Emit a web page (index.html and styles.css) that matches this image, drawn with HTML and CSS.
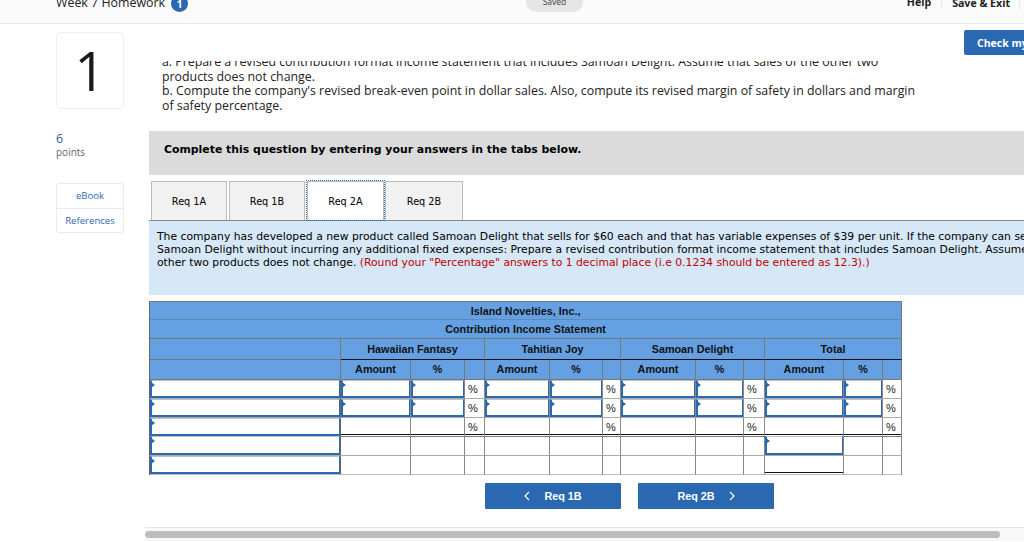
FILE: index.html
```html
<!DOCTYPE html>
<html lang="en">
<head>
<meta charset="utf-8">
<title>Week 7 Homework</title>
<link rel="stylesheet" href="styles.css">
</head>
<body>
<div class="page">
  <header class="topbar">
    <div class="assign"><span class="assign-name">Week 7 Homework</span><span class="badge">1</span></div>
    <div class="saved">Saved</div>
    <nav class="toplinks"><span class="toplink">Help</span><span class="toplink toplink-sep">Save &amp; Exit</span></nav>
  </header>
  <div class="main">
    <aside class="side">
      <div class="qnum">1</div>
      <div class="pts"><div class="pts-n">6</div><div class="pts-l">points</div></div>
      <div class="refs"><div class="ref ref-first">eBook</div><div class="ref">References</div></div>
    </aside>
    <section class="content">
      <div class="checkrow"><button class="check">Check my work</button></div>
      <div class="qtext"><p class="qtext-in">a. Prepare a revised contribution format income statement that includes Samoan Delight. Assume that sales of the other two<br>products does not change.<br>b. Compute the company's revised break-even point in dollar sales. Also, compute its revised margin of safety in dollars and margin<br>of safety percentage.</p></div>
      <div class="instr">Complete this question by entering your answers in the tabs below.</div>
      <div class="tabs">
        <div class="tab">Req 1A</div>
        <div class="tab">Req 1B</div>
        <div class="tab tab-on">Req 2A</div>
        <div class="tab">Req 2B</div>
      </div>
      <div class="prompt">The company has developed a new product called Samoan Delight that sells for $60 each and that has variable expenses of $39 per unit. If the company can sell<br>Samoan Delight without incurring any additional fixed expenses: Prepare a revised contribution format income statement that includes Samoan Delight. Assume that sales of the<br>other two products does not change. <span class="red">(Round your "Percentage" answers to 1 decimal place (i.e 0.1234 should be entered as 12.3).)</span></div>
      <table class="sheet">
        <colgroup>
          <col class="c191"><col class="c70"><col class="c54"><col class="c20"><col class="c65"><col class="c53"><col class="c18"><col class="c75"><col class="c48"><col class="c21"><col class="c79"><col class="c39"><col class="c19">
        </colgroup>
        <tr class="h1"><th colspan="13">Island Novelties, Inc.,</th></tr>
        <tr class="h2"><th colspan="13">Contribution Income Statement</th></tr>
        <tr class="h3"><th></th><th colspan="3">Hawaiian Fantasy</th><th colspan="3">Tahitian Joy</th><th colspan="3">Samoan Delight</th><th colspan="3">Total</th></tr>
        <tr class="h4"><th></th><th>Amount</th><th>%</th><th></th><th>Amount</th><th>%</th><th></th><th>Amount</th><th>%</th><th></th><th>Amount</th><th>%</th><th></th></tr>
        <tr class="d">
          <td><div class="inp"></div></td><td><div class="inp"></div></td><td><div class="inp"></div></td><td class="pc">%</td><td><div class="inp"></div></td><td><div class="inp"></div></td><td class="pc">%</td><td><div class="inp"></div></td><td><div class="inp"></div></td><td class="pc">%</td><td><div class="inp"></div></td><td><div class="inp"></div></td><td class="pc">%</td>
        </tr>
        <tr class="d">
          <td><div class="inp"></div></td><td><div class="inp"></div></td><td><div class="inp"></div></td><td class="pc">%</td><td><div class="inp"></div></td><td><div class="inp"></div></td><td class="pc">%</td><td><div class="inp"></div></td><td><div class="inp"></div></td><td class="pc">%</td><td><div class="inp"></div></td><td><div class="inp"></div></td><td class="pc">%</td>
        </tr>
        <tr class="d d-sum">
          <td><div class="inp"></div></td><td></td><td></td><td class="pc">%</td><td></td><td></td><td class="pc">%</td><td></td><td></td><td class="pc">%</td><td></td><td></td><td class="pc">%</td>
        </tr>
        <tr class="d d-after">
          <td><div class="inp inp-tall"></div></td><td></td><td></td><td></td><td></td><td></td><td></td><td></td><td></td><td></td><td><div class="inp inp-tall"></div></td><td></td><td></td>
        </tr>
        <tr class="d d-last">
          <td><div class="inp"></div></td><td></td><td></td><td></td><td></td><td></td><td></td><td></td><td></td><td></td><td class="dbl"></td><td></td><td></td>
        </tr>
      </table>
      <div class="pager">
        <button class="nav"><svg class="chev" viewBox="0 0 6 10"><path d="M5 1 1 5l4 4"/></svg>Req 1B</button>
        <button class="nav">Req 2B<svg class="chev chev-r" viewBox="0 0 6 10"><path d="M1 1l4 4-4 4"/></svg></button>
      </div>
    </section>
  </div>
  <div class="hscroll"><div class="thumb"></div></div>
</div>
</body>
</html>
```

FILE: styles.css
```css
* { box-sizing: border-box; }
html, body { margin: 0; padding: 0; background: #fff; }
.page {
  width: 1024px; height: 542px; overflow: hidden;
  display: flex; flex-direction: column;
  font-family: "Open Sans", sans-serif; color: #222;
}
.topbar {
  flex: none; height: 24px; background: #fbfbfb; border-bottom: 1px solid #e9e9e9;
  display: flex; overflow: hidden; padding-left: 56px;
}
.assign { display: flex; align-items: center; height: 12px; margin-top: -3px; width: 470px; flex: none; }
.assign-name { font-size: 12.4px; line-height: 12px; color: #222; }
.badge {
  width: 17px; height: 17px; margin-left: 6px; border-radius: 50%;
  background: #2a69b2; color: #fff; font: bold 10px/19px "Open Sans", sans-serif; text-align: center; flex: none;
}
.saved {
  width: 57px; height: 12px; background: #e5e5e5; border-radius: 0 0 10px 10px;
  font-size: 8.5px; line-height: 3px; text-align: center; color: #444; flex: none;
}
.toplinks { display: flex; margin-left: auto; margin-right: 4px; height: 11px; align-items: center; margin-top: -4px; }
.toplink { font-size: 10.6px; font-weight: 700; color: #222; padding-right: 10px; }
.toplink-sep { border-left: 1px solid #e9e9e9; padding-left: 10px; padding-right: 9px; border-right: 1px solid #e9e9e9; height: 14px; line-height: 14px; margin-top: 3px; }
.main { flex: none; height: 503px; display: flex; overflow: hidden; }
.side { flex: none; width: 149px; padding: 8px 25px 0 56px; }
.qnum {
  width: 68px; height: 77px; border: 1px solid #eee; border-radius: 5px;
  font-size: 54px; font-weight: 500; line-height: 74px; text-align: center; color: #1a1a1a;
}
.pts { margin-top: 22px; }
.pts-n { font-size: 12.5px; line-height: 15px; color: #2a5a9a; }
.pts-l { font-size: 10px; line-height: 13px; color: #666; }
.refs { margin-top: 24px; border: 1px solid #eaeaea; border-radius: 3px; width: 68px; }
.ref { height: 24px; font-size: 9.6px; line-height: 24px; text-align: center; color: #2d6ab5; border-top: 1px solid #eaeaea; }
.ref-first { border-top: 0; }
.content { flex: none; width: 875px; overflow: hidden; }
.checkrow { height: 37px; padding: 6px 0 0 815px; display: flex; }
.check {
  flex: none; width: 100px; height: 25px; padding: 0 0 0 13px; border: 0; border-radius: 2px; background: #2a69b2; color: #fff;
  font: 700 10.5px/24px "Open Sans", sans-serif; text-align: left; white-space: nowrap;
}
.qtext { margin-left: 13px; height: 54px; overflow: hidden; }
.qtext-in { margin: -6px 0 0; font-size: 12.35px; line-height: 14.7px; white-space: nowrap; color: #222; }
.instr {
  margin-top: 16px; height: 44px; padding: 11px 0 0 15px; background: #dbdbdb;
  font: 700 10.9px/15px "DejaVu Sans", sans-serif; color: #000;
}
.tabs { margin-top: 6px; height: 40px; padding-left: 2px; display: flex; gap: 2px; border-bottom: 1px solid #888; }
.tab {
  width: 76px; height: 39px; background: #f1f1f1; border: 1px solid #bbb; border-bottom: 0;
  font: 9.7px/39px "DejaVu Sans", sans-serif; text-align: center; color: #000;
}
.tab-on { width: 77px; background: #fff; outline: 1px dotted #2a69b2; }
.tabs .tab:last-child { margin-left: -1px; width: 78px; }
.prompt {
  height: 74px; padding: 9px 0 0 8px; background: #d6e8f7; white-space: nowrap;
  font: 10.8px/13px "DejaVu Sans", sans-serif; color: #000;
}
.red { color: #c00000; }
.sheet {
  margin-top: 6px; width: 753px; table-layout: fixed; border-collapse: separate; border-spacing: 0;
  font-family: "Liberation Sans", sans-serif; border-left: 1px solid #666; border-top: 1px solid #777;
}
.c191 { width: 191px; } .c70 { width: 70px; } .c54 { width: 54px; } .c20 { width: 20px; } .c65 { width: 65px; }
.c53 { width: 53px; } .c18 { width: 18px; } .c75 { width: 75px; } .c48 { width: 48px; } .c21 { width: 21px; }
.c79 { width: 79px; } .c39 { width: 39px; } .c19 { width: 19px; }
.sheet th {
  padding: 0; background: #65a1e2; border-right: 1px solid #777; border-bottom: 1px solid #5f89b8;
  font-size: 10.8px; font-weight: 700; color: #111; text-align: center;
}
.h1 th { height: 18px; line-height: 16px; }
.h2 th { height: 19px; border-bottom-color: #777; }
.h3 th { height: 21px; border-bottom-color: #111; }
.h3 th:first-child { border-bottom-color: #777; }
.h4 th { height: 20px; padding-bottom: 2px; border-bottom-color: #777; }
.sheet td {
  position: relative; height: 19px; padding: 0; background: #fff;
  border-right: 1px solid #888; border-bottom: 1px solid #aaa;
}
.sheet .pc { padding-left: 3px; font-size: 11px; text-align: left; color: #222; }
.sheet .d-sum td { height: 18px; border-bottom: 0; box-shadow: inset 0 -1px 0 #fff, inset 0 -2px 0 #111; }
.sheet .d-after td { height: 20px; box-shadow: inset 0 1px 0 #777; }
.d td:first-child { border-right-color: #666; }
.sheet .d-last td { border-bottom-color: #bbb; }
.sheet .dbl { box-shadow: inset 0 -1px 0 #fff, inset 0 -2px 0 #111; }
.inp {
  position: relative; height: 18px; background: #fff;
  border: 1px solid #2b69b1; border-left-width: 2px; border-bottom-width: 2px; border-top-color: #b9c4d0;
}
.inp-tall { height: 19px; }
.inp::before {
  content: ""; position: absolute; left: -1px; top: 1px;
  border-left: 4px solid #2a69b2; border-top: 3px solid transparent; border-bottom: 3px solid transparent;
}
.pager { margin: 8px 0 0 336px; display: flex; gap: 17px; }
.nav {
  width: 136px; height: 26px; padding: 0; border: 0; border-radius: 1px; background: #2a69b2; color: #fff;
  font: 700 10.8px/26px "Liberation Sans", sans-serif; display: flex; align-items: center; justify-content: center; gap: 14px;
}
.chev { width: 6px; height: 10px; }
.chev path { fill: none; stroke: #fff; stroke-width: 1.2; }
.hscroll { flex: none; margin-left: 145px; height: 14px; padding-top: 3px; background: #f8f8f8; border-top: 1px solid #e6e6e6; }
.thumb { width: 855px; height: 7px; border-radius: 4px; background: #bdbdbd; }
```
